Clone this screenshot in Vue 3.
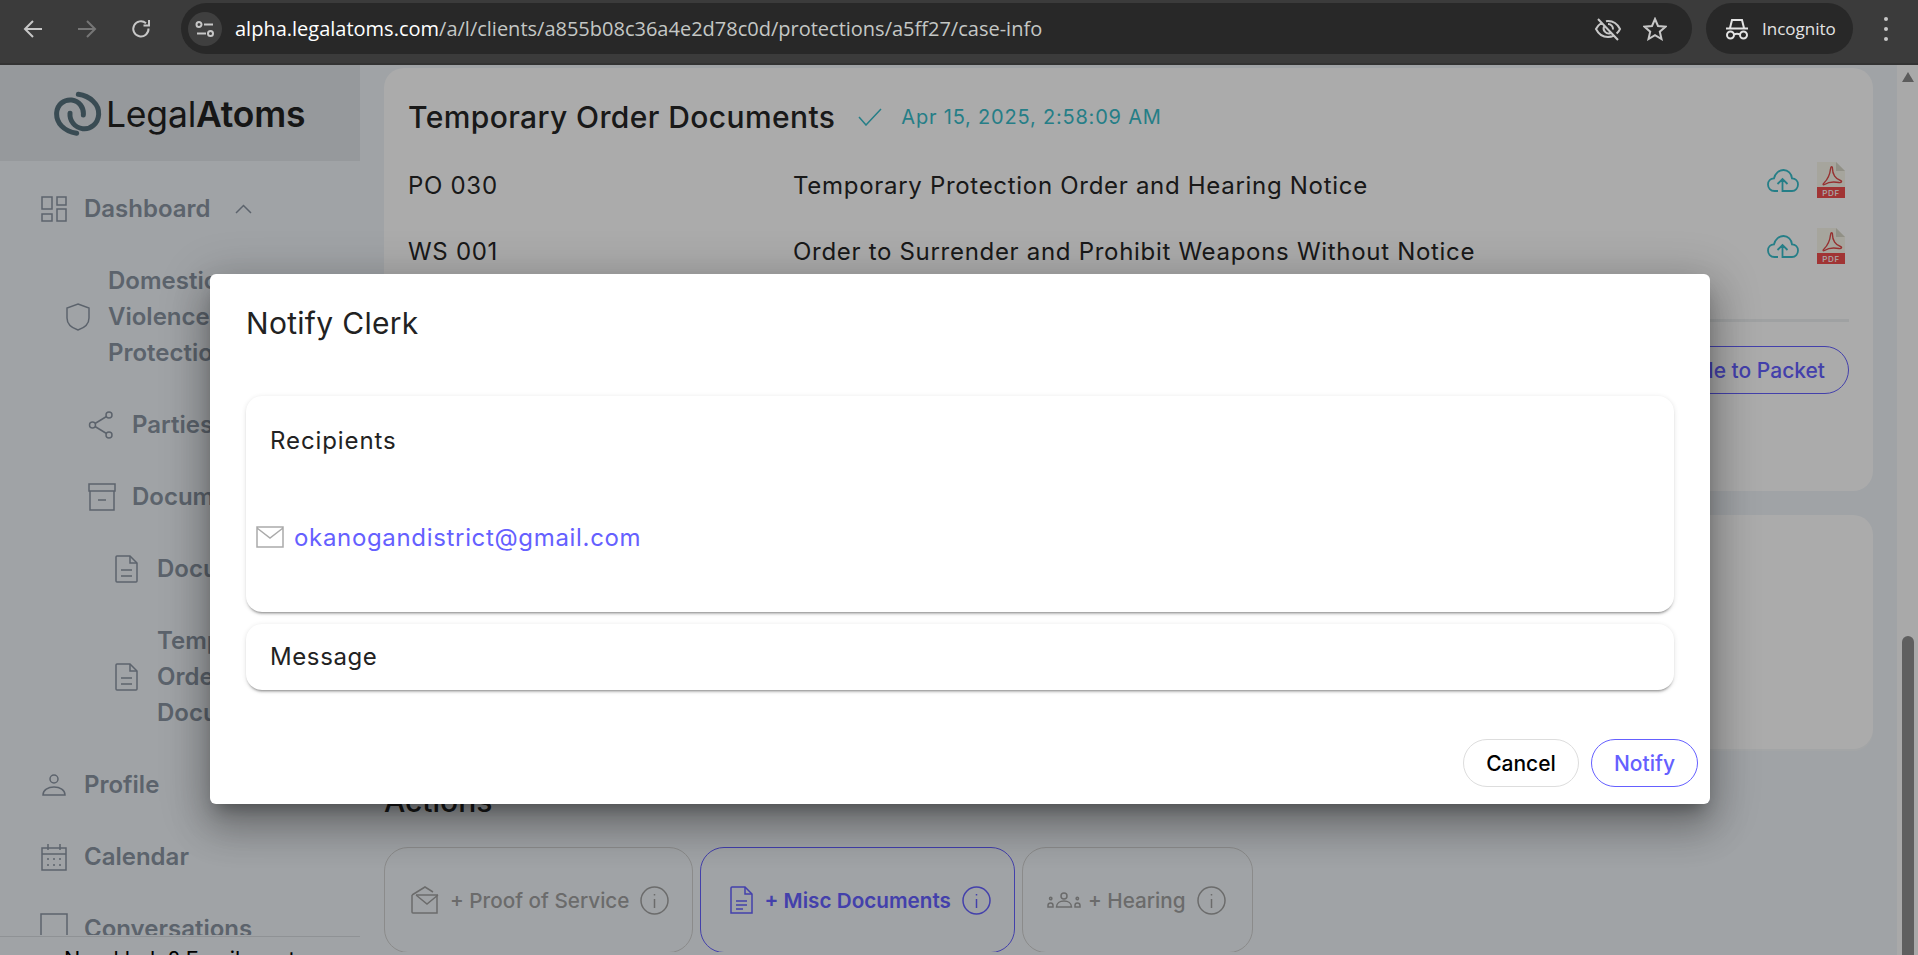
<template>
  <div class="window">
    <header class="toolbar">
      <button class="tool-btn"><svg width="20" height="20" viewBox="0 0 20 20"><path d="M19 10H2M10 2l-8 8 8 8" /></svg></button>
      <button class="tool-btn dim"><svg width="20" height="20" viewBox="0 0 20 20"><path d="M1 10h17M10 2l8 8-8 8" /></svg></button>
      <button class="tool-btn"><svg width="20" height="20" viewBox="0 0 20 20"><path d="M17.5 9.5A7.6 7.6 0 1 1 15 4.2M18 1v5.5h-5.5" /></svg></button>
      <div class="omnibox">
        <span class="site-btn">
          <svg width="20" height="18" viewBox="0 0 20 18"><path d="M9 4.5h9M2 13.500h9M1.500 4.500a2.500 2.500 0 1 0 5 0a2.500 2.500 0 1 0-5 0M13 13.500a2.500 2.500 0 1 0 5 0a2.500 2.500 0 1 0-5 0" /></svg>
        </span>
        <span class="url"><b>alpha.legalatoms.com</b>/a/l/clients/a855b08c36a4e2d78c0d/protections/a5ff27/case-info</span>
        <svg class="eye" width="28" height="24" viewBox="0 0 28 24"><path d="M4 2l20 21M8 5.500C5 7.500 3 10 2 12c2.500 5 7 8 12 8 2 0 4-.5 6-1.500M12 4.300c.7-.2 1.400-.3 2-.3 5 0 9.500 3 12 8-.8 1.700-2 3.300-3.400 4.600M10 9.500a5 5 0 0 0 6.500 6.500M14 7a5 5 0 0 1 5 5.500" /></svg>
        <svg class="star" width="24" height="24" viewBox="0 0 24 24"><path d="M12 2l3 7 7.500.7-5.700 5 1.700 7.300-6.500-3.900L5.500 22l1.700-7.300-5.700-5L9 9z" /></svg>
      </div>
      <div class="incognito">
        <svg width="24" height="22" viewBox="0 0 24 22"><path d="M5 10l2-8h10l2 8M1 10.500h22" /><path d="M2 17a3.500 3.500 0 1 0 7 0a3.500 3.500 0 1 0-7 0M15 17a3.500 3.500 0 1 0 7 0a3.500 3.500 0 1 0-7 0M9 16.500c2-1 4-1 6 0" /></svg>
        <span>Incognito</span>
      </div>
      <div class="kebab"><i></i><i></i><i></i></div>
    </header>

    <div class="page">
      <aside class="sidebar">
        <div class="logo">
          <svg width="49" height="45" viewBox="40 30 145 135" class="logo-mark">
            <path d="M110 157C70 150 48 125 50 95 52 70 72 55 95 57 118 60 132 80 130 102" />
            <path d="M115 40C150 45 178 70 176 100 174 128 152 146 128 143 105 140 88 120 90 97" />
          </svg>
          <span class="logo-text">Legal<b>Atoms</b></span>
        </div>
        <nav class="nav">
          <a v-for="item in navItems" :key="item.label + item.level" class="nav-item" :class="'level-' + item.level">
            <svg class="line-icon" :width="item.w" :height="item.h" :viewBox="`0 0 ${item.w} ${item.h}`">
              <path v-for="d in icons[item.icon]" :key="d" :d="d" />
            </svg>
            <span class="nav-label">{{ item.label }}</span>
            <svg v-if="item.open" class="line-icon chevron" width="17" height="10" viewBox="0 0 17 10"><path d="M1 9l7.500-7.500L16 9" /></svg>
          </a>
        </nav>
        <div class="help">Need help? Email us at</div>
      </aside>

      <main class="main">
        <section class="card first">
          <div class="card-head">
            <h2>Temporary Order Documents</h2>
            <svg class="line-icon teal" width="24" height="18" viewBox="0 0 24 18"><path d="M1 9l7 8L23 1" /></svg>
            <span class="stamp">Apr 15, 2025, 2:58:09 AM</span>
          </div>
          <div v-for="doc in documents" :key="doc.code" class="doc-row">
            <span class="doc-code">{{ doc.code }}</span>
            <span class="doc-name">{{ doc.name }}</span>
            <svg class="line-icon teal cloud" width="32" height="23" viewBox="0 0 32 23">
              <path d="M11 22H7.500C3.500 22 1 19 1 15.500 1 12 3.500 9.500 7 9.300 8 4.500 12 1 16.500 1 21 1 24.500 4.500 25 9.300 28.500 9.500 31 12 31 15.500 31 19 28.500 22 25 22H15.500V10M10.500 15l5-5 5 5" />
            </svg>
            <svg class="pdf" width="28" height="36" viewBox="0 0 28 36">
              <path class="pdf-page" d="M0 0h19l9 9v16H0z" />
              <path class="pdf-fold" d="M19 0l9 9h-9z" />
              <path class="pdf-mark" d="M7 21c3-3 6-9 6.500-14 .2-3 2-3 2 0 0 5 3 10 8 11.500 2 .6 1 2.500-1.500 2-5-1-10-1-14.500 2-1.500 1-2-.4-.5-1.500z" />
              <rect class="pdf-band" x="0" y="25" width="28" height="11" />
              <text x="14" y="33.500" text-anchor="middle" class="pdf-text">PDF</text>
            </svg>
          </div>
          <div class="divider"></div>
          <div class="packet-row">
            <button class="packet-btn">Add Bundle to Packet</button>
          </div>
        </section>

        <section class="card second"></section>

        <h2 class="actions-title">Actions</h2>
        <div class="tiles">
          <div v-for="tile in tiles" :key="tile.label" class="tile" :class="{ active: tile.active }">
            <svg class="line-icon" :width="tile.w" :height="tile.h" :viewBox="`0 0 ${tile.w} ${tile.h}`">
              <path v-for="d in icons[tile.icon]" :key="d" :d="d" />
            </svg>
            <span class="tile-label">{{ tile.label }}</span>
            <svg class="line-icon" width="29" height="29" viewBox="0 0 29 29">
              <path v-for="d in icons.info" :key="d" :d="d" />
            </svg>
          </div>
        </div>
      </main>

      <div class="scrollbar">
        <span class="scroll-arrow"></span>
        <span class="scroll-thumb"></span>
      </div>

      <div class="backdrop">
        <div class="dialog">
          <h1 class="dialog-title">Notify Clerk</h1>
          <div class="panel recipients">
            <div class="panel-title">Recipients</div>
            <div class="recipient">
              <svg class="mail" width="28" height="22" viewBox="0 0 28 22"><path d="M1 1h26v20H1zM1 2l13 10L27 2" /></svg>
              <span>okanogandistrict@gmail.com</span>
            </div>
          </div>
          <div class="panel message">
            <div class="panel-title">Message</div>
          </div>
          <div class="dialog-actions">
            <button class="btn cancel">Cancel</button>
            <button class="btn notify">Notify</button>
          </div>
        </div>
      </div>
    </div>
  </div>
</template>

<script setup>
const icons = {
  dashboard: ['M1 1h10v12H1z', 'M16 1h9v8h-9z', 'M1 18h10v7H1z', 'M16 13h9v12h-9z'],
  shield: ['M12 1l11 4v10c0 6-5 10-11 12C6 25 1 21 1 15V5z'],
  share: [
    'M1.500 14a3 3 0 1 0 6 0a3 3 0 1 0-6 0',
    'M18 4a3 3 0 1 0 6 0a3 3 0 1 0-6 0',
    'M18 24a3 3 0 1 0 6 0a3 3 0 1 0-6 0',
    'M7 12.500L18.500 5.500',
    'M7 15.500l11.500 7'
  ],
  archive: ['M1 1h26v7H1z', 'M2 8v19h24V8', 'M10 17h8'],
  doc: ['M1 2a1 1 0 0 1 1-1h13l7 7v18a1 1 0 0 1-1 1H2a1 1 0 0 1-1-1z', 'M15 1v7h7', 'M6 15h11', 'M6 21h11'],
  profile: ['M9 5a4 4 0 1 0 8 0a4 4 0 1 0-8 0', 'M2 21c0-5 5-8 11-8s11 3 11 8z'],
  calendar: ['M1 5h24v22H1z', 'M7 1v6', 'M19 1v6', 'M1 11h24', 'M6 16h2', 'M12 16h2', 'M18 16h2', 'M6 22h2', 'M12 22h2', 'M18 22h2'],
  chat: ['M1 1h26v30H1z'],
  mailOpen: ['M1 9v17a1 1 0 0 0 1 1h24V9', 'M5 9h22', 'M5 9l11 9 11-9', 'M1 9l13-8 8 5'],
  miscDoc: ['M1 2a1 1 0 0 1 1-1h13l7 7v19H1z', 'M15 1v7h7', 'M6 15h11', 'M6 19h11', 'M6 23h7'],
  hearing: [
    'M14 4a3 3 0 1 0 6 0a3 3 0 1 0-6 0',
    'M9.500 15c0-4 3.500-6 7.500-6s7.500 2 7.500 6z',
    'M2.500 6.500a1.200 1.200 0 1 0 2.400 0a1.200 1.200 0 1 0-2.400 0',
    'M29.100 6.500a1.200 1.200 0 1 0 2.400 0a1.200 1.200 0 1 0-2.400 0',
    'M1 15v-1.500c0-1.500 1-2.500 2.700-2.500s2.300 1 2.300 2.500V15z',
    'M28 15v-1.500c0-1.500.6-2.500 2.300-2.500s2.700 1 2.700 2.500V15z'
  ],
  info: ['M1 14.500a13.500 13.500 0 1 0 27 0a13.500 13.500 0 1 0-27 0', 'M14.500 13v9', 'M14.500 8v1.500']
}

const navItems = [
  { label: 'Dashboard', icon: 'dashboard', level: 0, w: 26, h: 26, open: true },
  { label: 'Domestic Violence Protection', icon: 'shield', level: 1, w: 24, h: 28 },
  { label: 'Parties', icon: 'share', level: 2, w: 28, h: 28 },
  { label: 'Documents', icon: 'archive', level: 2, w: 28, h: 28 },
  { label: 'Documents', icon: 'doc', level: 3, w: 23, h: 28 },
  { label: 'Temporary Order Documents', icon: 'doc', level: 3, w: 23, h: 28 },
  { label: 'Profile', icon: 'profile', level: 0, w: 26, h: 22 },
  { label: 'Calendar', icon: 'calendar', level: 0, w: 26, h: 28 },
  { label: 'Conversations', icon: 'chat', level: 0, w: 28, h: 32 }
]

const documents = [
  { code: 'PO 030', name: 'Temporary Protection Order and Hearing Notice' },
  { code: 'WS 001', name: 'Order to Surrender and Prohibit Weapons Without Notice' }
]

const tiles = [
  { label: '+ Proof of Service', icon: 'mailOpen', w: 28, h: 28 },
  { label: '+ Misc Documents', icon: 'miscDoc', w: 23, h: 28, active: true },
  { label: '+ Hearing', icon: 'hearing', w: 34, h: 16 }
]
</script>

<style>
html,
body {
  margin: 0;
  overflow: hidden;
}
</style>

<style scoped>
.window {
  width: 1918px;
  height: 955px;
  display: flex;
  flex-direction: column;
  overflow: hidden;
  font-family: Inter, 'Liberation Sans', sans-serif;
}

/* browser chrome */
.toolbar {
  height: 65px;
  border-bottom: 2px solid #333;
  background: #3b3b3b;
  display: flex;
  align-items: flex-start;
  padding: 3px 0 0 6px;
  box-sizing: border-box;
  color: #c7c7c7;
  flex-shrink: 0;
}

.toolbar svg {
  fill: none;
  stroke: currentColor;
  stroke-width: 2;
}

.tool-btn {
  width: 54px;
  height: 51px;
  padding: 0;
  border: 0;
  background: none;
  color: #c7c7c7;
  display: flex;
  align-items: center;
  justify-content: center;
}

.tool-btn.dim {
  color: #767676;
}

.omnibox {
  margin-left: 13px;
  width: 1511px;
  height: 51px;
  border-radius: 26px;
  background: #282828;
  display: flex;
  align-items: center;
  padding: 0 14px 0 7px;
  box-sizing: border-box;
}

.site-btn {
  width: 34px;
  height: 34px;
  border-radius: 50%;
  background: #3f3f3f;
  display: flex;
  align-items: center;
  justify-content: center;
  flex-shrink: 0;
}

.url {
  margin-left: 13px;
  font-family: 'Open Sans', sans-serif;
  font-size: 20px;
  color: #c4c7c5;
  white-space: nowrap;
  flex: 1;
}

.url b {
  font-weight: 400;
  color: #fff;
}

.eye {
  margin-right: 21px;
}

.star {
  margin-right: 11px;
}

.incognito {
  margin-left: 14px;
  width: 147px;
  height: 51px;
  border-radius: 26px;
  background: #282828;
  display: flex;
  align-items: center;
  gap: 13px;
  padding-left: 19px;
  box-sizing: border-box;
  font-family: 'Open Sans', sans-serif;
  font-size: 17px;
  color: #e3e3e3;
}

.kebab {
  margin-left: 31px;
  display: flex;
  flex-direction: column;
  gap: 6px;
  padding-top: 14px;
}

.kebab i {
  width: 4px;
  height: 4px;
  border-radius: 50%;
  background: #c7c7c7;
}

/* app */
.page {
  flex: 1;
  min-height: 0;
  position: relative;
  display: flex;
  background: #eff4f8;
}

.sidebar {
  width: 360px;
  flex-shrink: 0;
  display: flex;
  flex-direction: column;
  min-height: 0;
}

.logo {
  height: 96px;
  flex-shrink: 0;
  background: #e0e4e9;
  display: flex;
  align-items: center;
  padding-left: 53px;
  gap: 4px;
}

.logo-mark {
  fill: none;
  stroke: #56717c;
  stroke-width: 15;
  stroke-linecap: round;
}

.logo-text {
  padding-top: 2px;
  font-size: 35.500px;
  color: #222;
  letter-spacing: -0.2px;
}

.logo-text b {
  font-weight: 600;
}

.nav {
  flex: 1;
  min-height: 0;
  overflow: hidden;
  padding-top: 12px;
}

.nav-item {
  display: flex;
  align-items: center;
  padding: 18px 0;
  gap: 17px;
  color: #8a94a2;
  font-size: 24px;
  font-weight: 600;
  line-height: 36px;
}

.level-0 {
  padding-left: 41px;
}

.level-1 {
  padding-left: 66px;
  gap: 18px;
}

.level-2 {
  padding-left: 88px;
  gap: 16px;
}

.level-3 {
  padding-left: 115px;
  gap: 19px;
}

.nav-label {
  max-width: 160px;
}

.level-0 .nav-label {
  max-width: none;
}

.level-0:last-child .line-icon {
  margin: 0 -1px;
}

.line-icon {
  fill: none;
  stroke: currentColor;
  stroke-width: 1.5;
  flex-shrink: 0;
}

.chevron {
  margin-left: 7px;
}

.help {
  height: 8px;
  flex-shrink: 0;
  overflow: hidden;
  border-top: 1px solid #d5dade;
  padding: 10px 0 0 64px;
  box-sizing: content-box;
  margin-top: 1px;
  font-size: 21.600px;
  line-height: 24px;
  color: #000;
  white-space: nowrap;
}

.main {
  flex: 1;
  min-width: 0;
  height: 887px;
  overflow: hidden;
  padding: 3px 24px 0;
  box-sizing: border-box;
}

.card {
  background: #fff;
  border-radius: 20px;
}

.first {
  height: 423px;
  padding: 0 24px;
  margin-bottom: 24px;
  box-sizing: border-box;
}

.second {
  height: 234px;
  box-shadow: 0 2px 0 #f4f6f8;
}

.card-head {
  display: flex;
  align-items: center;
  padding-top: 28px;
  height: 42px;
  box-sizing: content-box;
  margin-bottom: 14px;
}

.card-head h2 {
  margin: 0 23px 0 0;
  font-size: 30px;
  font-weight: 500;
  letter-spacing: 0.4px;
  color: #262626;
}

.teal {
  color: #38bcc9;
}

.stamp {
  margin-left: 19px;
  font-size: 20px;
  color: #38bcc9;
  letter-spacing: 0.8px;
}

.doc-row {
  height: 66px;
  display: flex;
  align-items: center;
  font-size: 24px;
  letter-spacing: 0.7px;
  color: #262626;
}

.doc-code {
  width: 385px;
  flex-shrink: 0;
}

.doc-name {
  flex: 1;
}

.cloud {
  margin-right: 18px;
  margin-top: -10px;
  stroke-width: 1.8;
}

.pdf {
  margin-right: 4px;
  margin-top: -10px;
}

.pdf-page {
  fill: #f8f7ea;
}

.pdf-fold {
  fill: #d8d7c8;
}

.pdf-mark {
  fill: none;
  stroke: #e04848;
  stroke-width: 1.4;
}

.pdf-band {
  fill: #f04e4e;
}

.pdf-text {
  fill: #fff;
  font-size: 8px;
  font-family: Inter, sans-serif;
  font-weight: 500;
}

.divider {
  margin-top: 35px;
  height: 3px;
  background: #eef0f2;
}

.packet-row {
  display: flex;
  justify-content: flex-end;
  padding-top: 24px;
}

.packet-btn {
  height: 48px;
  padding: 0 23px;
  border: 1.5px solid #6560ff;
  border-radius: 24px;
  background: #fff;
  color: #6560ff;
  font-family: inherit;
  font-size: 21px;
  font-weight: 500;
}

.actions-title {
  margin: 31px 0 0;
  height: 42px;
  line-height: 42px;
  font-size: 30px;
  font-weight: 500;
  color: #262626;
}

.tiles {
  display: flex;
  gap: 7px;
  margin-top: 25px;
}

.tile {
  height: 106px;
  padding: 0 23px 0 26px;
  box-sizing: border-box;
  border: 1px solid #cfcfcf;
  border-radius: 24px;
  display: flex;
  align-items: center;
  gap: 11px;
  color: #a0a0a0;
  font-size: 20.700px;
  font-weight: 500;
}

.tile.active {
  padding-left: 29px;
  color: #6560ff;
  border-color: #6560ff;
  font-weight: 600;
}

.tile:last-child {
  padding-left: 24px;
  padding-right: 26px;
}

.tile:last-child .tile-label {
  margin-left: -4px;
}

.scrollbar {
  width: 21px;
  flex-shrink: 0;
  background: #fdfdfd;
  position: relative;
}

.scroll-arrow {
  position: absolute;
  top: 7px;
  left: 5px;
  width: 0;
  height: 0;
  border-left: 6px solid transparent;
  border-right: 6px solid transparent;
  border-bottom: 10px solid #8a8a8a;
}

.scroll-thumb {
  position: absolute;
  top: 571px;
  bottom: 0;
  left: 5px;
  width: 12px;
  border-radius: 6px 6px 0 0;
  background: #8e8e8e;
}

/* modal */
.backdrop {
  position: absolute;
  inset: 0;
  background: rgba(0, 0, 0, 0.33);
  display: flex;
  justify-content: center;
  align-items: flex-start;
  padding-top: 209px;
  box-sizing: border-box;
}

.dialog {
  width: 1500px;
  height: 530px;
  margin-left: 2px;
  box-sizing: border-box;
  background: #fff;
  border-radius: 6px;
  padding: 0 36px;
  box-shadow: 0 11px 15px -7px rgba(0, 0, 0, 0.3), 0 24px 38px 3px rgba(0, 0, 0, 0.2), 0 9px 46px 8px rgba(0, 0, 0, 0.18);
  display: flex;
  flex-direction: column;
}

.dialog-title {
  margin: 0 0 53px;
  padding-top: 29px;
  line-height: 40px;
  font-size: 30px;
  font-weight: 400;
  letter-spacing: 0.3px;
  color: #222;
}

.panel {
  border-radius: 16px;
  background: #fff;
  box-shadow: 0 3px 3px -2px rgba(0, 0, 0, 0.45), 0 1px 5px rgba(0, 0, 0, 0.12);
  box-sizing: border-box;
}

.recipients {
  height: 216px;
  margin-bottom: 12px;
  padding-top: 25px;
}

.message {
  height: 66px;
  padding-top: 13px;
}

.panel-title {
  padding-left: 24px;
  line-height: 40px;
  font-size: 24px;
  letter-spacing: 0.9px;
  color: #222;
}

.message .panel-title {
  letter-spacing: 0.6px;
}

.recipient {
  margin-top: 56px;
  padding-left: 10px;
  display: flex;
  align-items: center;
  gap: 10px;
  height: 40px;
  font-size: 24px;
  letter-spacing: 0.67px;
  color: #6560ff;
}

.mail {
  fill: none;
  stroke: #aaa;
  stroke-width: 1.5;
}

.dialog-actions {
  margin-top: 49px;
  margin-right: -24px;
  display: flex;
  justify-content: flex-end;
  gap: 12px;
}

.btn {
  height: 48px;
  border-radius: 24px;
  background: #fff;
  font-family: inherit;
  font-size: 21px;
  font-weight: 500;
  padding: 0;
}

.cancel {
  width: 116px;
  border: 1px solid #ddd;
  color: #000;
}

.notify {
  width: 107px;
  border: 1px solid #6560ff;
  color: #6560ff;
}
</style>
